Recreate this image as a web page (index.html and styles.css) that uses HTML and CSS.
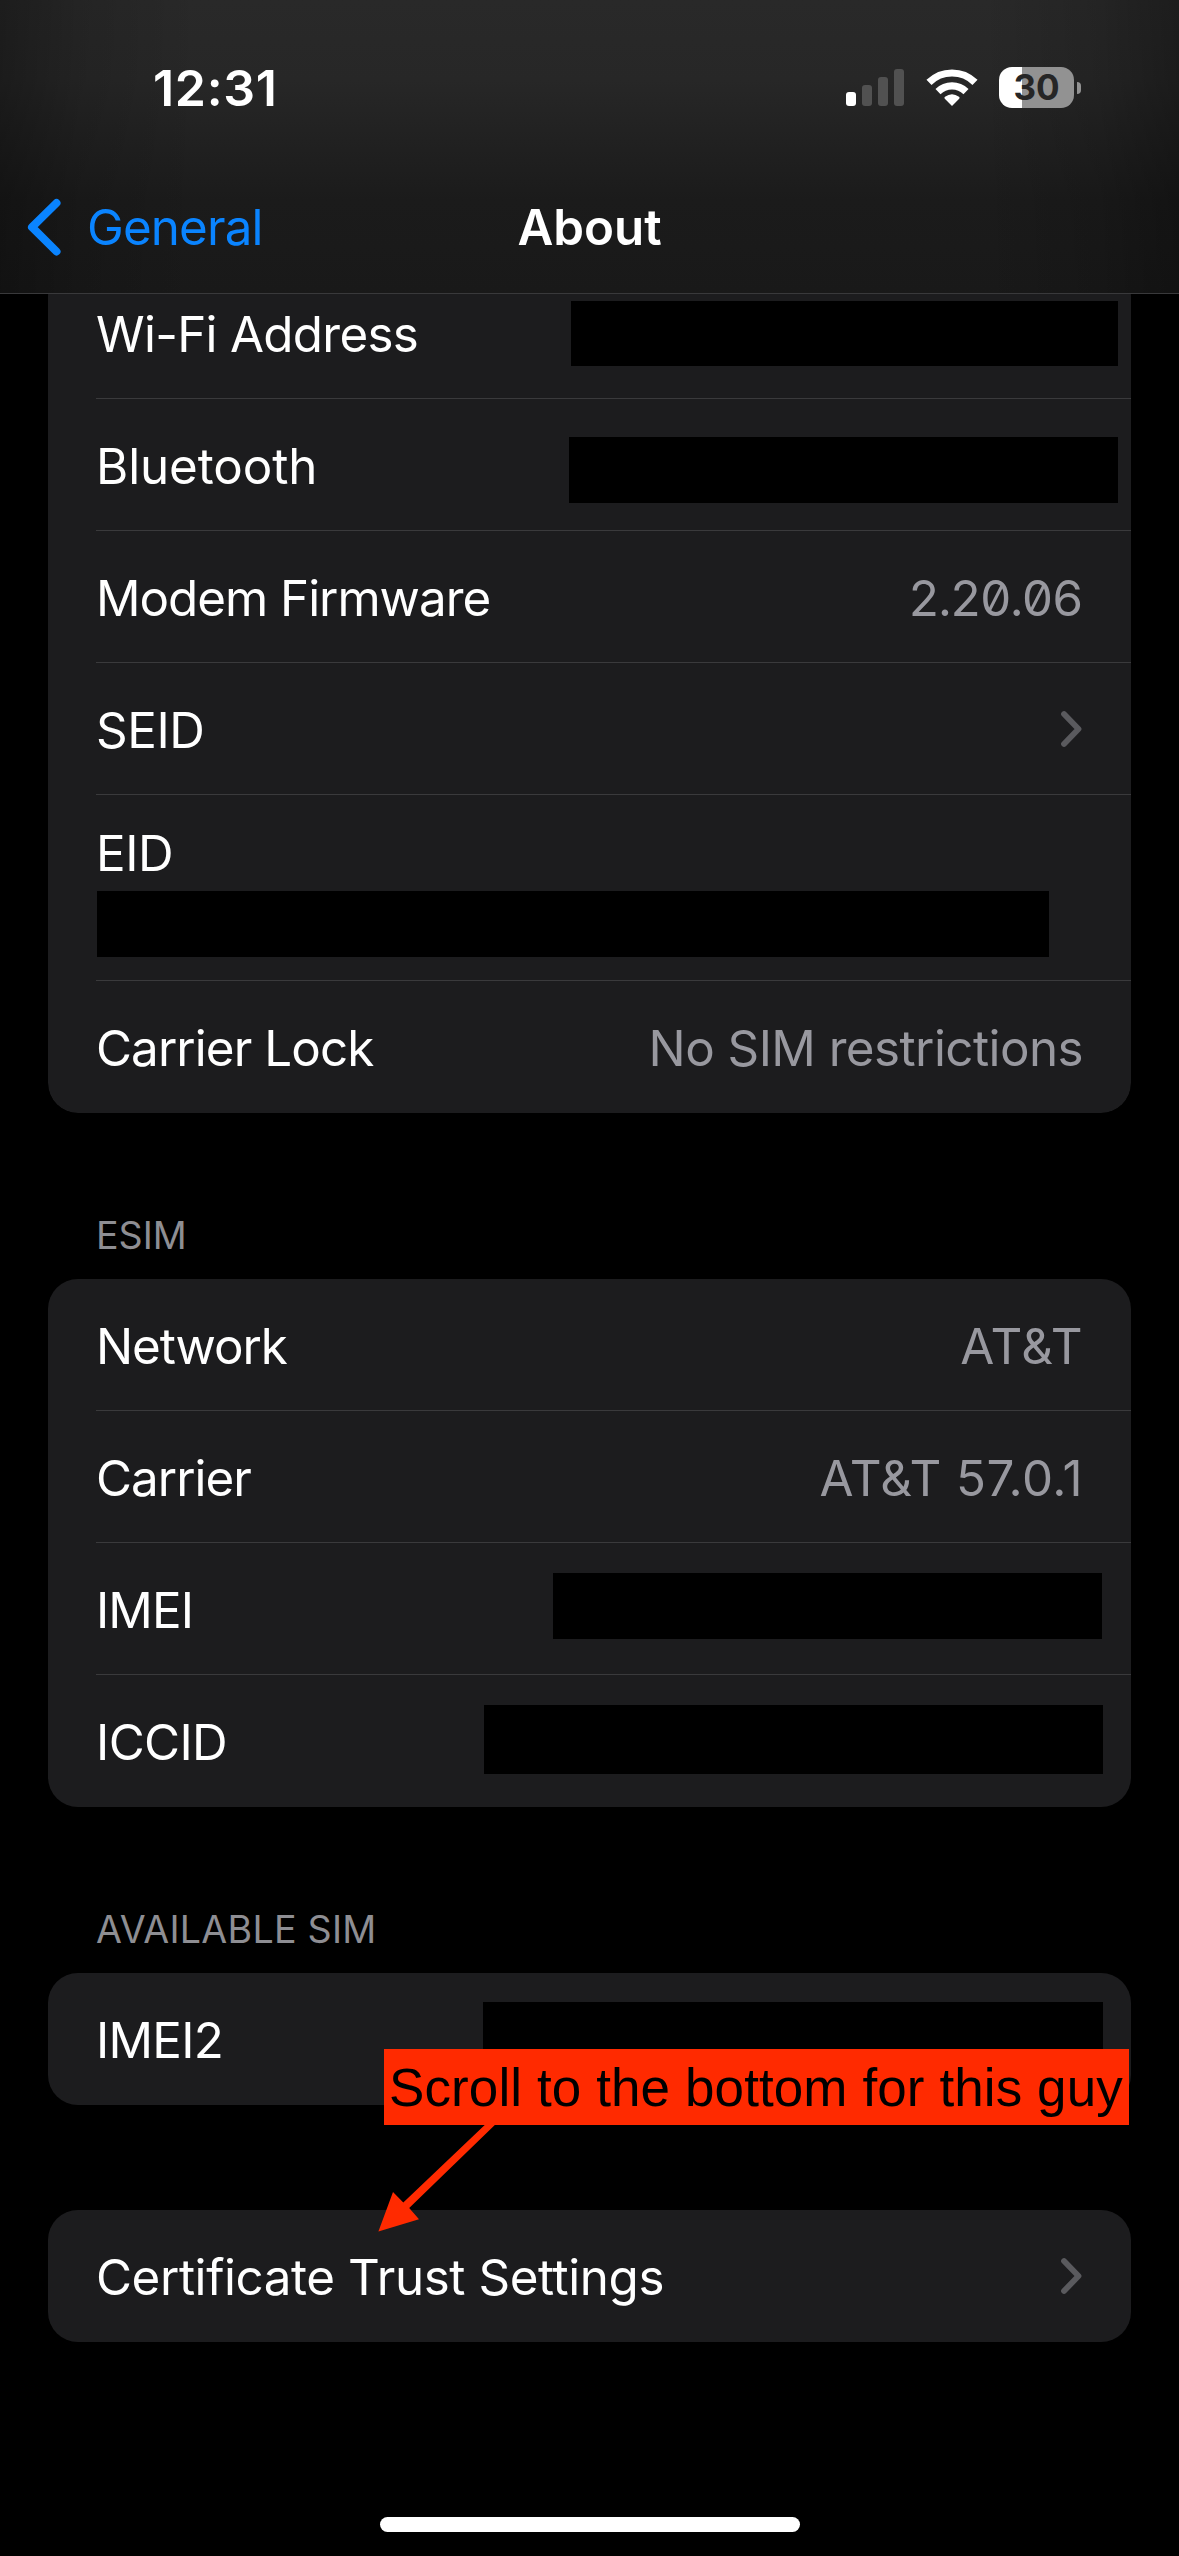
FILE: index.html
```html
<!DOCTYPE html>
<html lang="en">
<head>
<meta charset="utf-8">
<title>About</title>
<link rel="stylesheet" href="styles.css">
</head>
<body>
<div class="screen">
  <header class="header">
    <div class="status">
      <span class="time">12:31</span>
      <div class="status-icons">
        <svg class="signal" width="58" height="37" viewBox="0 0 58 37">
          <rect x="0" y="23" width="10" height="14" rx="3" fill="#fff"/>
          <rect x="16" y="16" width="10" height="21" rx="3" fill="#515151"/>
          <rect x="32" y="8" width="10" height="29" rx="3" fill="#515151"/>
          <rect x="48" y="0" width="10" height="37" rx="3" fill="#515151"/>
        </svg>
        <svg class="wifi" width="52" height="37" viewBox="0 0 52 37">
          <g fill="none" stroke="#fff" stroke-width="7.2">
            <path d="M3 13.4 A32.8 32.8 0 0 1 49 13.4"/>
            <path d="M12 22.6 A20 20 0 0 1 40 22.6"/>
          </g>
          <path d="M26 37 L18.8 29.8 Q17.8 28.6 19 27.8 Q26 22.8 33 27.8 Q34.200 28.600 33.200 29.800 Z" fill="#fff"/>
        </svg>
        <div class="battery"><span class="battery-body">30</span><span class="battery-nub"></span></div>
      </div>
    </div>
    <nav class="nav">
      <a class="back">
        <svg width="36" height="60" viewBox="0 0 36 60"><path d="M30.500 6 L6 30.200 L30.500 54.500" fill="none" stroke="#0a84ff" stroke-width="8" stroke-linecap="round" stroke-linejoin="round"/></svg>
        <span class="back-label">General</span>
      </a>
      <h1 class="title">About</h1>
    </nav>
  </header>
  <main class="content">
    <section class="card card-first">
      <div class="row"><span class="t-wifi">Wi-Fi Address</span><span class="redact r-wifi"></span></div>
      <div class="row"><span class="t-bt">Bluetooth</span><span class="redact r-bt"></span></div>
      <div class="row"><span class="t-modem">Modem Firmware</span><span class="value v-fw">2.20.06</span></div>
      <div class="row"><span class="t-seid">SEID</span><svg class="chevron" width="24" height="40" viewBox="0 0 24 40"><path d="M5 5 L19.500 20 L5 35" fill="none" stroke="#5a5a5e" stroke-width="5.800" stroke-linecap="round" stroke-linejoin="round"/></svg></div>
      <div class="row row-stacked"><span class="t-eid">EID</span><span class="redact r-eid"></span></div>
      <div class="row row-last"><span class="t-lock">Carrier Lock</span><span class="value v-lock">No SIM restrictions</span></div>
    </section>
    <h2 class="caption">ESIM</h2>
    <section class="card">
      <div class="row"><span class="t-net">Network</span><span class="value v-net">AT&amp;T</span></div>
      <div class="row"><span class="t-car">Carrier</span><span class="value v-car">AT&amp;T 57.0.1</span></div>
      <div class="row"><span class="t-imei">IMEI</span><span class="redact r-imei"></span></div>
      <div class="row row-last"><span class="t-iccid">ICCID</span><span class="redact r-iccid"></span></div>
    </section>
    <h2 class="caption caption-sim">AVAILABLE SIM</h2>
    <section class="card card-sim">
      <div class="row row-last"><span class="t-imei2">IMEI2</span><span class="redact r-imei2"></span></div>
      <div class="note">Scroll to the bottom for this guy</div>
      <svg class="arrow" width="140" height="120" viewBox="0 0 140 120"><path d="M8.400 111.400 L23 72 L33.300 82.600 L120 0 L130 0 L39.200 88 L49 99.300 Z" fill="#ff2a00"/></svg>
    </section>
    <section class="card card-trust">
      <div class="row row-last"><span class="t-cert">Certificate Trust Settings</span><svg class="chevron" width="24" height="40" viewBox="0 0 24 40"><path d="M5 5 L19.500 20 L5 35" fill="none" stroke="#5a5a5e" stroke-width="5.800" stroke-linecap="round" stroke-linejoin="round"/></svg></div>
    </section>
  </main>
  <div class="home-indicator"></div>
</div>
</body>
</html>
```
FILE: styles.css
```css
* { box-sizing: border-box; }
body {
  margin: 0;
  background: #000;
  color: #fff;
  font-family: Inter, "Liberation Sans", sans-serif;
  font-size: 49.300px;
  line-height: 60px;
}
.screen {
  width: 1179px;
  height: 2556px;
  display: flex;
  flex-direction: column;
  overflow: hidden;
}
.header {
  height: 294px;
  flex: none;
  border-bottom: 1px solid #39393b;
  background:
    linear-gradient(90deg, rgba(0,0,0,.3), rgba(0,0,0,.12) 80px, transparent 200px, transparent 979px, rgba(0,0,0,.12) 1099px, rgba(0,0,0,.3)),
    linear-gradient(#292929, #272727 80px, #1b1b1b 200px, #191919);
}
.status {
  height: 177px;
  display: flex;
  justify-content: space-between;
  padding: 58px 98px 0 153px;
}
.time { font-size: 50px; font-weight: 600; letter-spacing: .7px; }
.status-icons { display: flex; align-items: flex-start; }
.signal { margin-top: 11px; }
.wifi { margin: 11px 0 0 22px; }
.battery { display: flex; align-items: center; margin: 9px 0 0 21px; gap: 3px; }
.battery-body {
  width: 75px;
  height: 41px;
  border-radius: 13px;
  background: linear-gradient(90deg, #fff 23px, #929292 23px);
  color: #262626;
  font-size: 35px;
  font-weight: 700;
  line-height: 41px;
  text-align: center;
}
.battery-nub { width: 4px; height: 12px; border-radius: 0 4px 4px 0; background: #929292; }
.nav {
  height: 100px;
  display: grid;
  grid-template-columns: 1fr auto 1fr;
  align-items: center;
  padding: 0 26px;
}
.back { display: flex; align-items: center; gap: 25px; color: #0a84ff; }
.back-label { letter-spacing: -.85px; }
.title { margin: 0; font-size: 49.300px; font-weight: 600; }
.content { padding: 0 48px; flex: 1; }
.card { background: #1c1c1e; border-radius: 30px; position: relative; }
/* The first group is scrolled partly under the navigation bar. */
.card-first { margin-top: -27px; clip-path: inset(27px 0 0 0 round 0 0 30px 30px); }
.row {
  height: 132px;
  display: flex;
  align-items: center;
  justify-content: space-between;
  margin-left: 48px;
  padding: 2px 48px 0 0;
  border-bottom: 1px solid #3a3a3c;
  white-space: nowrap;
}
.row-last { border-bottom-color: transparent; }
.row-stacked {
  height: 186px;
  flex-direction: column;
  align-items: flex-start;
  justify-content: flex-start;
  padding-top: 28px;
  gap: 8px;
}
.t-wifi { letter-spacing: -.68px; }
.t-bt { letter-spacing: -.1px; }
.t-modem { letter-spacing: -1px; }
.t-seid, .t-eid { letter-spacing: -.4px; }
.t-lock { letter-spacing: -.9px; }
.t-net { letter-spacing: -1.050px; }
.t-car { letter-spacing: -.95px; }
.t-imei { letter-spacing: -.9px; }
.t-iccid { letter-spacing: -.6px; }
.t-imei2 { letter-spacing: -.75px; }
.t-cert { letter-spacing: -.4px; }
.value { color: #98989f; }
.v-fw { font-feature-settings: "zero", "tnum"; letter-spacing: -1.750px; margin-right: 1px; }
.v-lock { letter-spacing: -.54px; }
.v-net { letter-spacing: .5px; }
.v-car { letter-spacing: .4px; }
.chevron { margin-top: -2px; }
.redact { background: #000; height: 66px; flex: none; align-self: flex-start; }
.r-wifi { width: 547px; height: 65px; margin: 32px -35px 0 0; }
.r-bt { width: 549px; margin: 36px -35px 0 0; }
.r-eid { width: 952px; margin-left: 1px; }
.r-imei { width: 549px; margin: 28px -19px 0 0; }
.r-iccid { width: 619px; height: 69px; margin: 28px -20px 0 0; }
.r-imei2 { width: 620px; height: 69px; margin: 27px -20px 0 0; }
.caption {
  margin: 0;
  padding: 101px 0 0 48px;
  height: 166px;
  font-size: 37.600px;
  font-weight: 400;
  line-height: 44px;
  color: #8e8e93;
}
.caption-sim { letter-spacing: .27px; }
.card-trust { margin-top: 105px; }
.note {
  position: absolute;
  left: 336px;
  top: 76px;
  z-index: 1;
  width: 745px;
  height: 76px;
  padding-left: 5px;
  background: #ff2a00;
  color: #000;
  font: 53px/77px "Liberation Sans", sans-serif;
  letter-spacing: .1px;
  white-space: nowrap;
}
.arrow { position: absolute; left: 322px; top: 147px; z-index: 1; }
.home-indicator {
  width: 420px;
  height: 15px;
  margin: 0 auto 24px;
  border-radius: 8px;
  background: #fff;
}
```
